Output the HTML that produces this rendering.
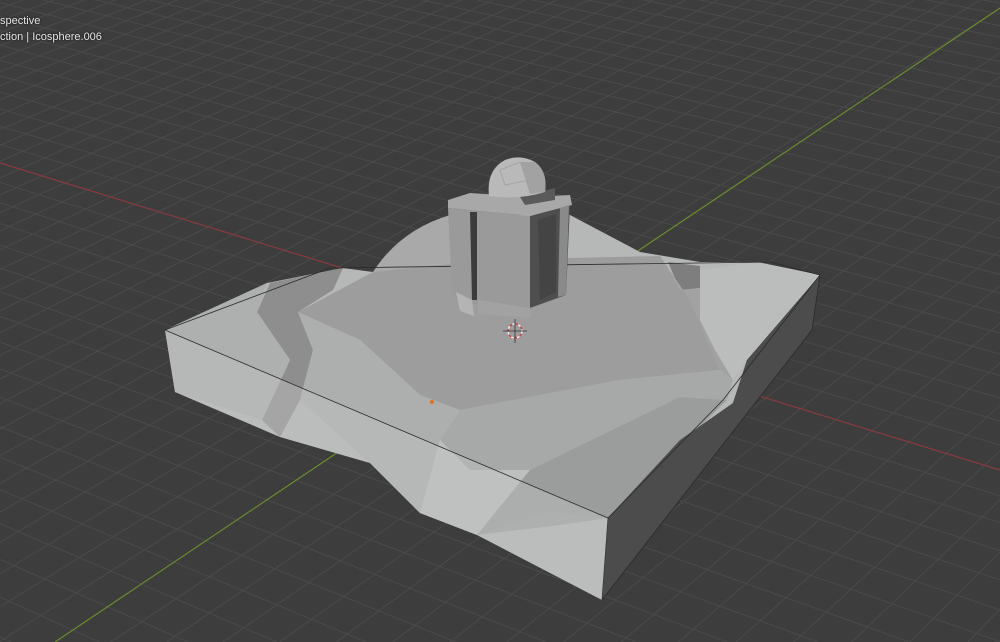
<!DOCTYPE html>
<html><head><meta charset="utf-8"><style>
html,body{margin:0;padding:0;background:#3d3d3d;width:1000px;height:642px;overflow:hidden}
svg{position:absolute;left:0;top:0}
.t{position:absolute;left:0;color:#e8e8e8;font:11px "Liberation Sans",sans-serif;text-shadow:0 0 2px #000}
</style></head><body>
<svg id="s" width="1000" height="642" viewBox="0 0 1000 642">
<rect width="1000" height="642" fill="#3d3d3d"/>
<g id="grid" stroke="#4a4a4a" stroke-width="1" fill="none"></g>
<line x1="0" y1="163" x2="1000" y2="470" stroke="#8a3a3e" stroke-width="1.2"/>
<line x1="55" y1="642" x2="1000" y2="8" stroke="#6a8a2e" stroke-width="1.2"/>
<!-- model silhouette (top + left/front face) -->
<polygon fill="#b6b8b8" points="165,330 267,283 343,268 373,272 420,235 455,215 570,215 640,252 700,262 757,262 820,275 747,360 733,403 608,518 602,600 477,535 420,513 370,463 280,437 175,392"/>
<!-- back hump -->
<path fill="#a9a9a9" d="M373,272 Q400,230 450,215 L470,270 L380,290 Z"/>
<!-- central plateau -->
<polygon fill="#9d9d9d" points="298,312 373,272 470,262 570,258 660,256 690,300 720,370 620,380 460,410 420,395 360,340"/>
<!-- left notch dark -->
<polygon fill="#8e8e8e" points="257,312 270,283 343,268 333,290 298,312 313,350 300,400 280,437 262,420 290,360"/>
<!-- left top facet -->
<polygon fill="#aeafaf" points="165,330 267,283 257,312 290,360 262,420 175,392"/>
<!-- front slope light -->
<polygon fill="#adafaf" points="298,312 360,340 420,395 460,410 440,440 420,513 370,463 300,400 313,350"/>
<polygon fill="#a7a8a8" points="460,410 620,380 720,370 733,380 727,400 680,397 530,470 470,470 440,440"/>
<polygon fill="#bdbfbf" points="420,513 440,440 470,470 530,470 477,535"/>
<!-- strip sloping to right face -->
<polygon fill="#9b9d9d" points="680,397 727,400 608,518 550,512 477,535 530,470"/>
<polygon fill="#8f9191" opacity="0.6" points="477,535 550,512 608,518 560,525"/>
<!-- left face lower translucency -->
<polygon fill="#c0c2c2" opacity="0.45" points="175,392 280,437 370,463 420,513 477,535 602,600 608,518 165,330"/>
<!-- right raised corner -->
<polygon fill="#7e7e7e" points="668,262 700,266 700,288 680,290"/>
<polygon fill="#bbbcbc" points="700,270 757,262 820,275 747,360 733,380 715,350 700,320"/>
<polygon fill="#a2a2a2" points="660,256 680,290 700,288 700,320 715,350 733,380 720,370 690,300"/>
<!-- right face dark -->
<polygon fill="#4c4c4c" points="820,275 812,330 602,600 608,518 680,440 733,403 747,360"/>
<!-- box outline -->
<polyline fill="none" stroke="#2a2a2a" stroke-width="0.8" points="165,330 608,518 723,400 820,275"/>
<polyline fill="none" stroke="#2a2a2a" stroke-width="0.8" points="165,330 330,268 770,262 820,275"/>
<line x1="608" y1="518" x2="602" y2="600" stroke="#3a3a3a" stroke-width="0.8"/>
<line x1="602" y1="600" x2="812" y2="330" stroke="#2a2a2a" stroke-width="0.8"/>
<line x1="820" y1="275" x2="812" y2="330" stroke="#2a2a2a" stroke-width="0.8"/>
<!-- tower -->
<polygon fill="#9a9a9a" points="448,208 530,216 530,308 458,303 452,292"/>
<polygon fill="#4e4e4e" points="530,216 570,205 566,295 530,308"/>
<polygon fill="#444" points="538,220 556,214 556,292 540,300"/>
<polygon fill="#a8a8a8" points="448,200 470,193 530,197 570,195 572,205 530,216 448,208"/>
<polygon fill="#5a5a5a" points="520,197 555,188 555,200 525,205"/>
<polygon fill="#3c3c3c" points="470,212 477,212 477,300 472,300"/>
<polygon fill="#8a8a8a" points="560,208 569,205 566,295 558,297"/>
<polygon fill="#b4b4b4" points="456,292 472,300 474,316 460,311"/>
<polygon fill="#a2a2a2" points="478,300 530,308 530,318 478,314"/>
<!-- dome -->
<path fill="#b9b9b9" d="M489,196 Q486,170 505,160 Q520,154 535,162 Q548,172 545,192 Q520,200 489,196 Z"/>
<path fill="#a2a2a2" d="M520,162 L535,162 Q548,172 545,192 L530,194 Z"/>
<path fill="none" stroke="#a0a0a0" stroke-width="0.8" d="M500,170 L520,162 L530,180 L505,185 Z M520,162 L540,170"/>
<!-- 3D cursor -->
<circle cx="515" cy="331" r="7" fill="none" stroke="#e8e8e8" stroke-width="1.5" stroke-dasharray="3 3"/>
<circle cx="515" cy="331" r="7" fill="none" stroke="#c44" stroke-width="1.5" stroke-dasharray="3 3" stroke-dashoffset="3"/>
<line x1="515" y1="319" x2="515" y2="343" stroke="#333" stroke-width="0.8"/>
<line x1="503" y1="331" x2="527" y2="331" stroke="#333" stroke-width="0.8"/>
<circle cx="432" cy="402" r="2" fill="#e07020"/>
</svg>
<div class="t" style="top:15px">spective</div>
<div class="t" style="top:31px">ction | Icosphere.006</div>
<script>
(function(){
var O=[539,328.5],VX=[-3000,-758],VY=[2500,-941],a=-0.0086,b=0.012;
function P(u,v){var d=1+a*u+b*v;if(d<0.03)return null;
return [(O[0]+a*u*VX[0]+b*v*VY[0])/d,(O[1]+a*u*VX[1]+b*v*VY[1])/d];}
var g=document.getElementById('grid'),h='';
function line(f){var pts=[];for(var t=-300;t<=300;t+=1){var p=f(t);if(p&&p[0]>-200&&p[0]<1200&&p[1]>-200&&p[1]<900)pts.push(p[0].toFixed(1)+','+p[1].toFixed(1));}
if(pts.length>1)h+='<polyline points="'+pts.join(' ')+'"/>';}
for(var k=-80;k<=80;k++){if(k==0)continue;line(function(t){return P(k,t)});line(function(t){return P(t,k)});}
g.innerHTML=h;
})();
</script>
</body></html>
